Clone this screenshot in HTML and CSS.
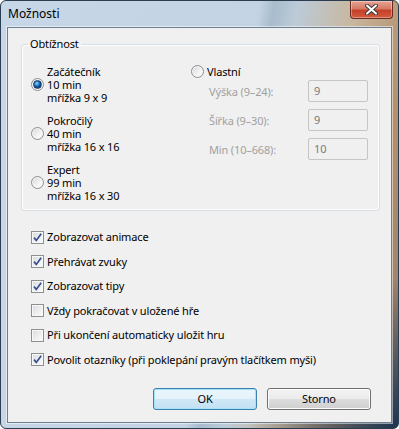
FILE: index.html
```html
<!DOCTYPE html>
<html lang="cs">

<head>
    <meta charset="UTF-8">
    <meta name="viewport" content="width=device-width, initial-scale=1.0">
    <!-- Styly dialogu -->
    <link rel="stylesheet" href="styles.css">
    <title>Možnosti</title>
</head>

<body>
    <!-- Okno dialogu -->
    <div class="okno">
        <div class="titulek">
            <span class="nazev">Možnosti</span>
            <span class="zavrit">
                <svg width="13" height="11" viewBox="0 0 13 11">
                    <path d="M2 1.5 L11 9.5 M11 1.5 L2 9.5" stroke="#3b3b3b" stroke-width="4" stroke-linecap="round"/>
                    <path d="M2 1.5 L11 9.5 M11 1.5 L2 9.5" stroke="#ffffff" stroke-width="2" stroke-linecap="round"/>
                </svg>
            </span>
        </div>
        <div class="obsah">
            <!-- Skupina obtížnosti -->
            <fieldset class="skupina">
                <legend>Obtížnost</legend>
                <div class="obtiznosti">
                    <div class="urovne">
                        <div class="uroven">
                            <span class="radio zvoleno"></span>
                            <div class="popis">Začátečník<br>10 min<br>mřížka 9 x 9</div>
                        </div>
                        <div class="uroven">
                            <span class="radio"></span>
                            <div class="popis">Pokročilý<br>40 min<br>mřížka 16 x 16</div>
                        </div>
                        <div class="uroven">
                            <span class="radio"></span>
                            <div class="popis">Expert<br>99 min<br>mřížka 16 x 30</div>
                        </div>
                    </div>
                    <div class="vlastni">
                        <div class="vlastniHlava"><span class="radio"></span>Vlastní</div>
                        <div class="pole">
                            <span class="popisek">Výška (9–24):</span>
                            <span class="vstup">9</span>
                            <span class="popisek">Šířka (9–30):</span>
                            <span class="vstup">9</span>
                            <span class="popisek">Min (10–668):</span>
                            <span class="vstup">10</span>
                        </div>
                    </div>
                </div>
            </fieldset>
            <!-- Zaškrtávací volby -->
            <div class="volby">
                <div class="volba"><span class="zaskrt"><svg width="9" height="9" viewBox="0 0 9 9"><path d="M1 4.6 L3.3 7.4 L8.2 0.8" fill="none" stroke="#33508f" stroke-width="1.7"/></svg></span>Zobrazovat animace</div>
                <div class="volba"><span class="zaskrt"><svg width="9" height="9" viewBox="0 0 9 9"><path d="M1 4.6 L3.3 7.4 L8.2 0.8" fill="none" stroke="#33508f" stroke-width="1.7"/></svg></span>Přehrávat zvuky</div>
                <div class="volba"><span class="zaskrt"><svg width="9" height="9" viewBox="0 0 9 9"><path d="M1 4.6 L3.3 7.4 L8.2 0.8" fill="none" stroke="#33508f" stroke-width="1.7"/></svg></span>Zobrazovat tipy</div>
                <div class="volba"><span class="zaskrt"></span>Vždy pokračovat v uložené hře</div>
                <div class="volba"><span class="zaskrt"></span>Při ukončení automaticky uložit hru</div>
                <div class="volba"><span class="zaskrt"><svg width="9" height="9" viewBox="0 0 9 9"><path d="M1 4.6 L3.3 7.4 L8.2 0.8" fill="none" stroke="#33508f" stroke-width="1.7"/></svg></span>Povolit otazníky (při poklepání pravým tlačítkem myši)</div>
            </div>
            <!-- Tlačítka -->
            <div class="tlacitka">
                <span class="tlacitko vychozi">OK</span>
                <span class="tlacitko">Storno</span>
            </div>
        </div>
    </div>
</body>

</html>
```

FILE: styles.css
```css
* {
    box-sizing: border-box;
}

body {
    margin: 0px;
    font-family: "Segoe UI", "Noto Sans", sans-serif;
    font-size: 12px;
    color: #000;
}

.okno {
    width: 399px;
    height: 429px;
    border: 1px solid #2b3d50;
    border-radius: 6px;
    padding: 0px 6px 5px 6px;
    display: flex;
    flex-direction: column;
    background:
        radial-gradient(circle at 100% 100%, #1d3650 0px, rgba(29, 54, 80, 0) 150px),
        linear-gradient(100deg, #c7d7e7 0%, #c3d3e3 55%, #a8bccd 58%, #bccbd8 63%, #c8b79f 75%, #b48f6c 88%, #8f7a6a 100%);
}

.titulek {
    height: 26px;
    display: flex;
    justify-content: space-between;
    align-items: flex-start;
}

.nazev {
    margin: 5px 0px 0px 1px;
    line-height: 16px;
}

.zavrit {
    width: 43px;
    height: 18px;
    margin-right: -1px;
    display: flex;
    align-items: center;
    justify-content: center;
    border: 1px solid #6b2a20;
    border-top: none;
    border-radius: 0px 0px 4px 4px;
    background: linear-gradient(#e6a494 0%, #d67a64 45%, #c4412a 55%, #d55a3c 100%);
    box-shadow: inset 0px 0px 0px 1px rgba(255, 255, 255, 0.35);
}

.obsah {
    flex: 1;
    display: flex;
    flex-direction: column;
    background-color: #f0f0f0;
    border: 1px solid #6c7e91;
    box-shadow: 0px 0px 0px 1px rgba(255, 255, 255, 0.5);
    font-size: 11px;
    letter-spacing: -0.15px;
}

.skupina {
    margin: 8px 11px 0px 13px;
    padding: 13px 0px 8px 0px;
    border: 1px solid #d5dfe5;
    border-radius: 3px;
    box-shadow: inset 0px 0px 0px 1px #fff;
}

.skupina legend {
    margin-left: 6px;
    padding: 0px 2px;
    line-height: 16px;
}

.obtiznosti {
    display: grid;
    grid-template-columns: 160px 1fr;
    padding-left: 9px;
}

.urovne {
    display: flex;
    flex-direction: column;
    gap: 10px;
}

.uroven {
    display: flex;
    align-items: center;
    gap: 3px;
    line-height: 13px;
}

.radio {
    width: 13px;
    height: 13px;
    flex: none;
    border-radius: 50%;
    border: 1px solid #8e8f8f;
    background: linear-gradient(135deg, #d4d4d4 0%, #f4f4f4 60%, #ffffff 100%);
    box-shadow: inset 0px 0px 0px 1px #f6f6f6;
    display: flex;
    align-items: center;
    justify-content: center;
}

.zvoleno::after {
    content: "";
    width: 7px;
    height: 7px;
    border-radius: 50%;
    background: radial-gradient(circle at 40% 35%, #8ee0ff 0px, #2a8ad4 2px, #0f4c8c 3.5px);
    border: 1px solid #1d3c68;
}

.vlastniHlava {
    display: flex;
    align-items: center;
    gap: 3px;
    line-height: 13px;
}

.pole {
    display: grid;
    grid-template-columns: 99px 60px;
    align-items: center;
    row-gap: 7px;
    margin: 2px 0px 0px 18px;
}

.popisek {
    color: #a0a0a0;
}

.vstup {
    height: 22px;
    line-height: 20px;
    padding-left: 5px;
    border: 1px solid #c5c5c5;
    border-radius: 2px;
    color: #7a7a7a;
}

.volby {
    margin-top: 18px;
    padding-left: 23px;
    display: flex;
    flex-direction: column;
    gap: 8.5px;
}

.volba {
    display: flex;
    align-items: center;
    gap: 3px;
    line-height: 16px;
}

.zaskrt {
    width: 13px;
    height: 13px;
    flex: none;
    border: 1px solid #8e8f8f;
    background: linear-gradient(135deg, #d8dadc 0%, #f0f0f0 60%, #fbfbfb 100%);
    box-shadow: inset 0px 0px 0px 1px #f8f8f8;
    display: flex;
    align-items: center;
    justify-content: center;
}

.tlacitka {
    margin-top: auto;
    padding: 0px 20px 12px 0px;
    display: flex;
    justify-content: flex-end;
    gap: 10px;
}

.tlacitko {
    width: 104px;
    height: 22px;
    line-height: 20px;
    text-align: center;
    border: 1px solid #707070;
    border-radius: 3px;
    background: linear-gradient(#f2f2f2 0%, #ebebeb 50%, #dddddd 50%, #cfcfcf 100%);
    box-shadow: inset 0px 0px 0px 1px #fcfcfc;
}

.vychozi {
    border-color: #3c7fb1;
    background: linear-gradient(#eaf6fd 0%, #e4f2fb 50%, #cfe8f7 50%, #c2e0f3 100%);
    box-shadow: inset 0px 0px 0px 1px #a7e3f6;
}
```
